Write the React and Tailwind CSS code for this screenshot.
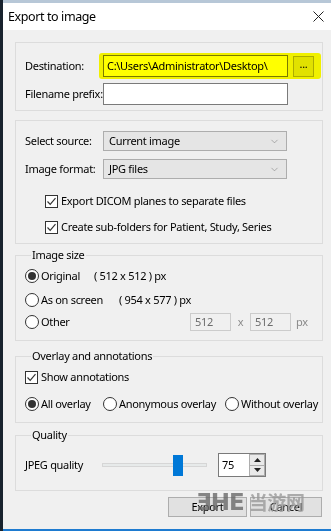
import { ChevronDown } from "lucide-react";

const font = { fontFamily: '"Noto Sans", "Liberation Sans", sans-serif' };

const Checkbox = ({ checked }) => (
  <span className="w-[13px] h-[13px] border border-[#333] bg-white flex items-center justify-center shrink-0">
    {checked && (
      <svg width="11" height="11" viewBox="0 0 11 11">
        <polyline points="1.5,5.5 4.2,8.3 9.5,2.2" fill="none" stroke="#333" strokeWidth="1.2" />
      </svg>
    )}
  </span>
);

const Radio = ({ checked }) => (
  <span className="w-[14px] h-[14px] rounded-full border border-[#333] bg-white flex items-center justify-center shrink-0">
    {checked && <span className="w-[8px] h-[8px] rounded-full bg-[#333]" />}
  </span>
);

const Select = ({ value }) => (
  <div className="w-[184px] h-[20px] bg-[#e5e5e5] border border-[#adadad] flex items-center justify-between pl-[5px] pr-[6px]">
    <span>{value}</span>
    <ChevronDown size={11} strokeWidth={1.2} className="text-[#777]" />
  </div>
);

const Group = ({ title, className, children }) => (
  <fieldset className={`border border-[#dcdcdc] ${className}`}>
    <legend className="ml-[6px] px-[1px] leading-[14px]">{title}</legend>
    {children}
  </fieldset>
);

export default function App() {
  return (
    <div className="w-[331px] h-[531px] flex bg-[#f0f0f0] text-[11px] leading-[14px] tracking-[-0.3px] whitespace-nowrap text-black overflow-hidden relative" style={font}>
      <div className="w-[3px] bg-[#18222d]" />
      <div className="flex-1 flex flex-col">
        <div className="h-[3px] bg-[#b7c7d7]" />
        <div className="h-[27px] bg-white flex items-center justify-between pl-[5px] pr-[7px]">
          <span className="text-[12.5px] tracking-[-0.4px]">Export to image</span>
          <svg width="11" height="11" viewBox="0 0 11 11">
            <path d="M0.5 0.5 L10.5 10.5 M10.5 0.5 L0.5 10.5" stroke="#222" strokeWidth="1" />
          </svg>
        </div>

        <div className="flex-1 flex flex-col pl-[12px] w-[320px]">
          {/* destination */}
          <div className="mt-[12px] h-[69px] border border-[#dcdcdc] pl-[9px] flex flex-col">
            <div className="mt-[12px] flex items-center relative">
              <span className="w-[78px]">Destination:</span>
              <div className="w-[185px] h-[22px] border border-[#7a7a7a] bg-white flex items-center pl-[3px]">
                C:\Users\Administrator\Desktop\
              </div>
              <div className="ml-[5px] w-[21px] h-[21px] border border-[#adadad] bg-[#e1e1e1] flex items-center justify-center pb-[4px]">...</div>
              <div className="absolute left-[74px] top-[-2px] w-[222px] h-[26px] bg-[#ffff00] mix-blend-multiply rounded-[3px]" />
            </div>
            <div className="mt-[6px] flex items-center">
              <span className="w-[78px]">Filename prefix:</span>
              <div className="w-[185px] h-[22px] border border-[#7a7a7a] bg-white" />
            </div>
          </div>

          {/* source */}
          <div className="mt-[9px] h-[124px] border border-[#dcdcdc] pl-[9px] flex flex-col">
            <div className="mt-[10px] flex items-center">
              <span className="w-[78px]">Select source:</span>
              <Select value="Current image" />
            </div>
            <div className="mt-[8px] flex items-center">
              <span className="w-[78px]">Image format:</span>
              <Select value="JPG files" />
            </div>
            <div className="mt-[15px] ml-[20px] flex items-center gap-[3px]">
              <Checkbox checked />
              <span>Export DICOM planes to separate files</span>
            </div>
            <div className="mt-[12px] ml-[20px] flex items-center gap-[3px]">
              <Checkbox checked />
              <span>Create sub-folders for Patient, Study, Series</span>
            </div>
          </div>

          {/* image size */}
          <Group title="Image size" className="mt-[4px] h-[93px] pl-[9px]">
            <div className="mt-[5px] h-[18px] flex items-center">
              <Radio checked />
              <span className="ml-[2px] w-[53px]">Original</span>
              <span>( 512 x 512 ) px</span>
            </div>
            <div className="mt-[6px] h-[18px] flex items-center">
              <Radio />
              <span className="ml-[2px] w-[78px]">As on screen</span>
              <span>( 954 x 577 ) px</span>
            </div>
            <div className="mt-[4px] h-[18px] flex items-center">
              <Radio />
              <span className="ml-[2px] w-[149px]">Other</span>
              <div className="w-[41px] h-[18px] border border-[#cccccc] text-[#6d6d6d] flex items-center pl-[4px]">512</div>
              <span className="w-[19px] text-center text-[#8a8a8a]">x</span>
              <div className="w-[41px] h-[18px] border border-[#cccccc] text-[#6d6d6d] flex items-center pl-[4px]">512</div>
              <span className="ml-[5px] text-[#8a8a8a]">px</span>
            </div>
          </Group>

          {/* overlay */}
          <Group title="Overlay and annotations" className="mt-[8px] h-[74px] pl-[9px]">
            <div className="mt-[7px] flex items-center gap-[3px]">
              <Checkbox checked />
              <span>Show annotations</span>
            </div>
            <div className="mt-[13px] flex items-center">
              <Radio checked />
              <span className="ml-[2px] w-[62px]">All overlay</span>
              <Radio />
              <span className="ml-[2px] w-[106px]">Anonymous overlay</span>
              <Radio />
              <span className="ml-[2px]">Without overlay</span>
            </div>
          </Group>

          {/* quality */}
          <Group title="Quality" className="mt-[5px] h-[63px] pl-[9px]">
            <div className="mt-[11px] flex items-center">
              <span className="w-[77px]">JPEG quality</span>
              <div className="w-[105px] h-[24px] flex items-center relative">
                <div className="w-full h-[4px] bg-[#e7eaea] border border-[#d6d6d6]" />
                <div className="absolute left-[71px] top-[2px] w-[10px] h-[21px] bg-[#0078d7]" />
              </div>
              <div className="ml-[11px] w-[48px] h-[24px] border border-[#7a7a7a] bg-white flex">
                <span className="flex-1 pl-[3px] flex items-center">75</span>
                <div className="w-[16px] flex flex-col">
                  <div className="flex-1 border border-[#adadad] bg-[#e9e9e9] flex items-center justify-center">
                    <svg width="7" height="4" viewBox="0 0 7 4"><polygon points="0,4 7,4 3.5,0" fill="#222" /></svg>
                  </div>
                  <div className="flex-1 border border-t-0 border-[#adadad] bg-[#e9e9e9] flex items-center justify-center">
                    <svg width="7" height="4" viewBox="0 0 7 4"><polygon points="0,0 7,0 3.5,4" fill="#222" /></svg>
                  </div>
                </div>
              </div>
            </div>
          </Group>

          <div className="mt-[6px] flex justify-end gap-[3px] pr-[1px]">
            <div className="w-[79px] h-[20px] border border-[#adadad] bg-[#e1e1e1] flex items-center justify-center">Export</div>
            <div className="w-[72px] h-[20px] border border-[#adadad] bg-[#e1e1e1] flex items-center justify-center">Cancel</div>
          </div>
        </div>
        <div className="h-[2px] bg-[#1e7bd0]" />
      </div>

      {/* watermark */}
      <div className="absolute left-[196px] top-[495px] flex items-center gap-[5px] font-bold">
        <span className="text-[23px] tracking-[-1px] text-[#6a6a6a] opacity-80" style={{ fontFamily: '"DejaVu Sans", sans-serif' }}>ƎHE</span>
        <span className="text-[19px] text-[#9a9a9a] opacity-80" style={{ fontFamily: '"Noto Sans CJK SC", sans-serif' }}>当游网</span>
      </div>
    </div>
  );
}
